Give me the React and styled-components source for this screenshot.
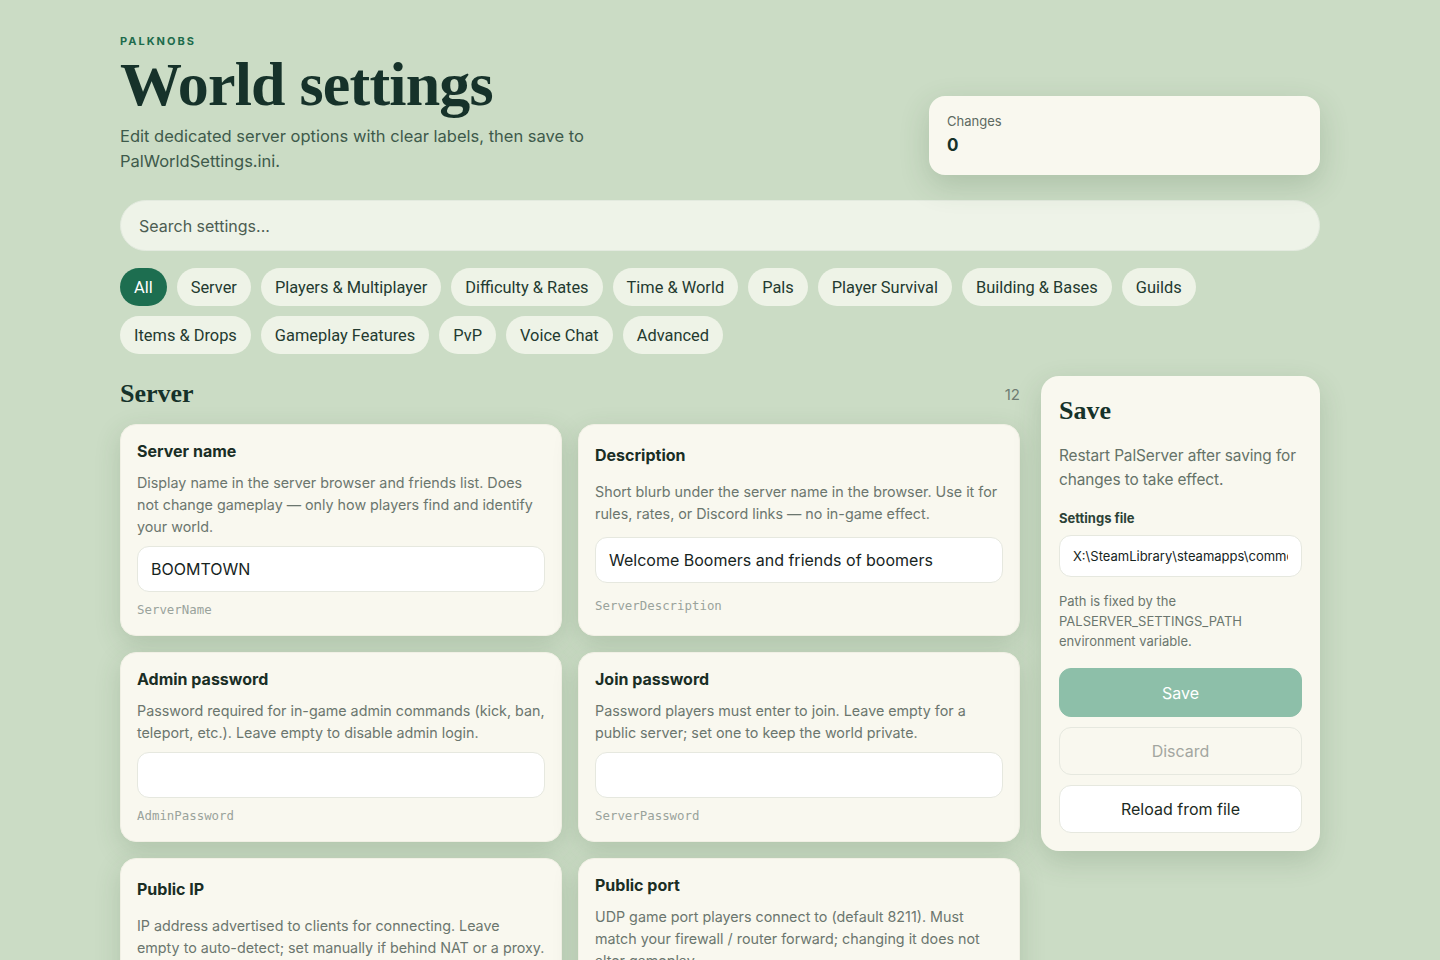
import React from 'react';
import styled, { createGlobalStyle } from 'styled-components';

const GlobalStyle = createGlobalStyle`
  html, body {
    margin: 0;
    padding: 0;
    background: #cbdcc5;
  }
  body {
    font-family: Inter, "Noto Sans", sans-serif;
    color: #1c3328;
  }
  * { box-sizing: border-box; }
`;

const Page = styled.div`
  max-width: 1200px;
  margin: 0 auto;
  padding: 34px 0 40px;
`;

const Header = styled.header`
  display: flex;
  justify-content: space-between;
  align-items: flex-end;
`;

const Eyebrow = styled.div`
  font-size: 11px;
  line-height: 14px;
  font-weight: 700;
  letter-spacing: 2px;
  color: #1d6b4c;
`;

const Title = styled.h1`
  margin: 4px 0 8px;
  font-family: "Liberation Serif", serif;
  font-weight: 700;
  font-size: 62px;
  line-height: 64px;
  letter-spacing: -0.8px;
  color: #16322a;
`;

const Subtitle = styled.p`
  margin: 0;
  max-width: 480px;
  font-size: 16.5px;
  line-height: 25px;
  color: #3e5a4b;
`;

const ChangesCard = styled.div`
  width: 391px;
  height: 79px;
  margin-bottom: -1px;
  padding: 17px 18px;
  background: #f9f8ef;
  border-radius: 16px;
  box-shadow: 0 10px 30px rgba(50, 85, 50, 0.2);
`;

const ChangesLabel = styled.div`
  font-size: 13px;
  line-height: 16px;
  color: #5d6a61;
`;

const ChangesValue = styled.div`
  margin-top: 6px;
  font-size: 17px;
  font-weight: 700;
  color: #16322a;
`;

const Search = styled.input`
  display: block;
  width: 100%;
  height: 51px;
  margin-top: 26px;
  padding: 0 18px;
  border: 1px solid #e3eadf;
  border-radius: 26px;
  background: #eef3e8;
  font-family: inherit;
  font-size: 16px;
  color: #1c3328;
  outline: none;
  &::placeholder { color: #4c5d52; }
`;

const Chips = styled.div`
  display: flex;
  flex-wrap: wrap;
  gap: 10px;
  margin-top: 17px;
`;

const Chip = styled.button`
  height: 38px;
  padding: 0 14px;
  border: none;
  border-radius: 19px;
  font-family: Roboto, "Liberation Sans", sans-serif;
  font-size: 16.4px;
  background: ${p => (p.$active ? '#1d6e50' : '#eef3e7')};
  color: ${p => (p.$active ? '#ffffff' : '#233a30')};
  cursor: pointer;
`;

const Body = styled.div`
  display: grid;
  grid-template-columns: 900px 279px;
  gap: 21px;
  margin-top: 22px;
  align-items: start;
`;

const SectionHead = styled.div`
  display: flex;
  justify-content: space-between;
  align-items: center;
  height: 34px;
  margin: 0 0 14px;
  padding-top: 2px;
`;

const SectionTitle = styled.h2`
  margin: 0;
  font-family: "Liberation Serif", serif;
  font-weight: 700;
  font-size: 26px;
  color: #16322a;
`;

const Count = styled.span`
  font-size: 15px;
  color: #6f7c73;
`;

const Grid = styled.div`
  display: grid;
  grid-template-columns: 1fr 1fr;
  gap: 16px;
`;

const Card = styled.div`
  display: flex;
  flex-direction: column;
  justify-content: space-evenly;
  padding: 16px 16px 17px 16px;
  background: #f9f8ef;
  border: 1px solid #f1f0e5;
  border-radius: 16px;
  box-shadow: 0 8px 26px rgba(50, 85, 50, 0.17);
`;

const CardTitle = styled.div`
  font-size: 16px;
  line-height: 20px;
  font-weight: 700;
  color: #1a2e25;
`;

const CardDesc = styled.p`
  margin: 11px 0 8px;
  font-size: 14.3px;
  line-height: 22px;
  color: #6b766e;
`;

const Field = styled.input`
  display: block;
  width: 100%;
  height: ${p => p.$h || 46}px;
  padding: 0 ${p => p.$pad || 13}px;
  border: 1px solid #e6e8df;
  border-radius: 12px;
  background: #ffffff;
  font-family: inherit;
  font-size: ${p => p.$fs || 16}px;
  color: #16241d;
  outline: none;
`;

const Key = styled.code`
  display: block;
  margin-top: 10px;
  font-family: "DejaVu Sans Mono", "Liberation Mono", monospace;
  font-size: 12.4px;
  line-height: 16px;
  color: #9aa39c;
`;

const Side = styled.aside`
  display: flex;
  flex-direction: column;
  padding: 20px 18px 18px;
  background: #f9f8ef;
  border-radius: 18px;
  box-shadow: 0 10px 28px rgba(50, 85, 50, 0.18);
`;

const SideTitle = styled.h3`
  margin: 0;
  font-family: "Liberation Serif", serif;
  font-weight: 700;
  font-size: 26px;
  line-height: 30px;
  color: #16322a;
`;

const SideDesc = styled.p`
  margin: 18px 0 17px;
  font-size: 15.4px;
  letter-spacing: -0.1px;
  line-height: 24px;
  color: #657268;
`;

const SideLabel = styled.div`
  margin-bottom: 8px;
  font-size: 13px;
  line-height: 18px;
  font-weight: 700;
  color: #2c4237;
`;

const Help = styled.p`
  margin: 14px 0 17px;
  font-size: 13px;
  line-height: 20px;
  color: #6b766e;
`;

const Buttons = styled.div`
  display: flex;
  flex-direction: column;
  gap: 10px;
`;

const Button = styled.button`
  height: ${p => (p.$primary ? 49 : 48)}px;
  border-radius: 12px;
  font-family: inherit;
  font-size: 16px;
  cursor: pointer;
  border: 1px solid ${p => (p.$primary ? '#8dbfa9' : '#e6e8df')};
  background: ${p => (p.$primary ? '#8dbfa9' : p.$muted ? '#f9f8ef' : '#ffffff')};
  color: ${p => (p.$primary ? '#ffffff' : p.$muted ? '#a3a6a0' : '#1c2a23')};
`;

const categories = [
  'All', 'Server', 'Players & Multiplayer', 'Difficulty & Rates', 'Time & World', 'Pals',
  'Player Survival', 'Building & Bases', 'Guilds', 'Items & Drops', 'Gameplay Features',
  'PvP', 'Voice Chat', 'Advanced',
];

const settings = [
  {
    title: 'Server name',
    desc: 'Display name in the server browser and friends list. Does not change gameplay — only how players find and identify your world.',
    value: 'BOOMTOWN',
    key: 'ServerName',
  },
  {
    title: 'Description',
    desc: 'Short blurb under the server name in the browser. Use it for rules, rates, or Discord links — no in-game effect.',
    value: 'Welcome Boomers and friends of boomers',
    key: 'ServerDescription',
  },
  {
    title: 'Admin password',
    desc: 'Password required for in-game admin commands (kick, ban, teleport, etc.). Leave empty to disable admin login.',
    value: '',
    key: 'AdminPassword',
  },
  {
    title: 'Join password',
    desc: 'Password players must enter to join. Leave empty for a public server; set one to keep the world private.',
    value: '',
    key: 'ServerPassword',
  },
  {
    title: 'Public IP',
    desc: 'IP address advertised to clients for connecting. Leave empty to auto-detect; set manually if behind NAT or a proxy.',
    value: '',
    key: 'PublicIP',
  },
  {
    title: 'Public port',
    desc: 'UDP game port players connect to (default 8211). Must match your firewall / router forward; changing it does not alter gameplay.',
    value: '8211',
    key: 'PublicPort',
  },
];

export default function App() {
  return (
    <Page>
      <GlobalStyle />
      <Header>
        <div>
          <Eyebrow>PALKNOBS</Eyebrow>
          <Title>World settings</Title>
          <Subtitle>Edit dedicated server options with clear labels, then save to PalWorldSettings.ini.</Subtitle>
        </div>
        <ChangesCard>
          <ChangesLabel>Changes</ChangesLabel>
          <ChangesValue>0</ChangesValue>
        </ChangesCard>
      </Header>

      <Search placeholder="Search settings..." />

      <Chips>
        {categories.map(c => (
          <Chip key={c} $active={c === 'All'}>{c}</Chip>
        ))}
      </Chips>

      <Body>
        <main>
          <SectionHead>
            <SectionTitle>Server</SectionTitle>
            <Count>12</Count>
          </SectionHead>
          <Grid>
            {settings.map(s => (
              <Card key={s.key}>
                <CardTitle>{s.title}</CardTitle>
                <CardDesc>{s.desc}</CardDesc>
                <Field defaultValue={s.value} />
                <Key>{s.key}</Key>
              </Card>
            ))}
          </Grid>
        </main>

        <Side>
          <SideTitle>Save</SideTitle>
          <SideDesc>Restart PalServer after saving for changes to take effect.</SideDesc>
          <SideLabel>Settings file</SideLabel>
          <Field
            $h={42}
            $pad={13}
            $fs={13}
            readOnly
            defaultValue={'X:\\SteamLibrary\\steamapps\\common\\PalServer\\Pal\\Saved\\Config\\WindowsServer\\PalWorldSettings.ini'}
          />
          <Help>Path is fixed by the PALSERVER_SETTINGS_PATH environment variable.</Help>
          <Buttons>
            <Button $primary>Save</Button>
            <Button $muted>Discard</Button>
            <Button>Reload from file</Button>
          </Buttons>
        </Side>
      </Body>
    </Page>
  );
}
